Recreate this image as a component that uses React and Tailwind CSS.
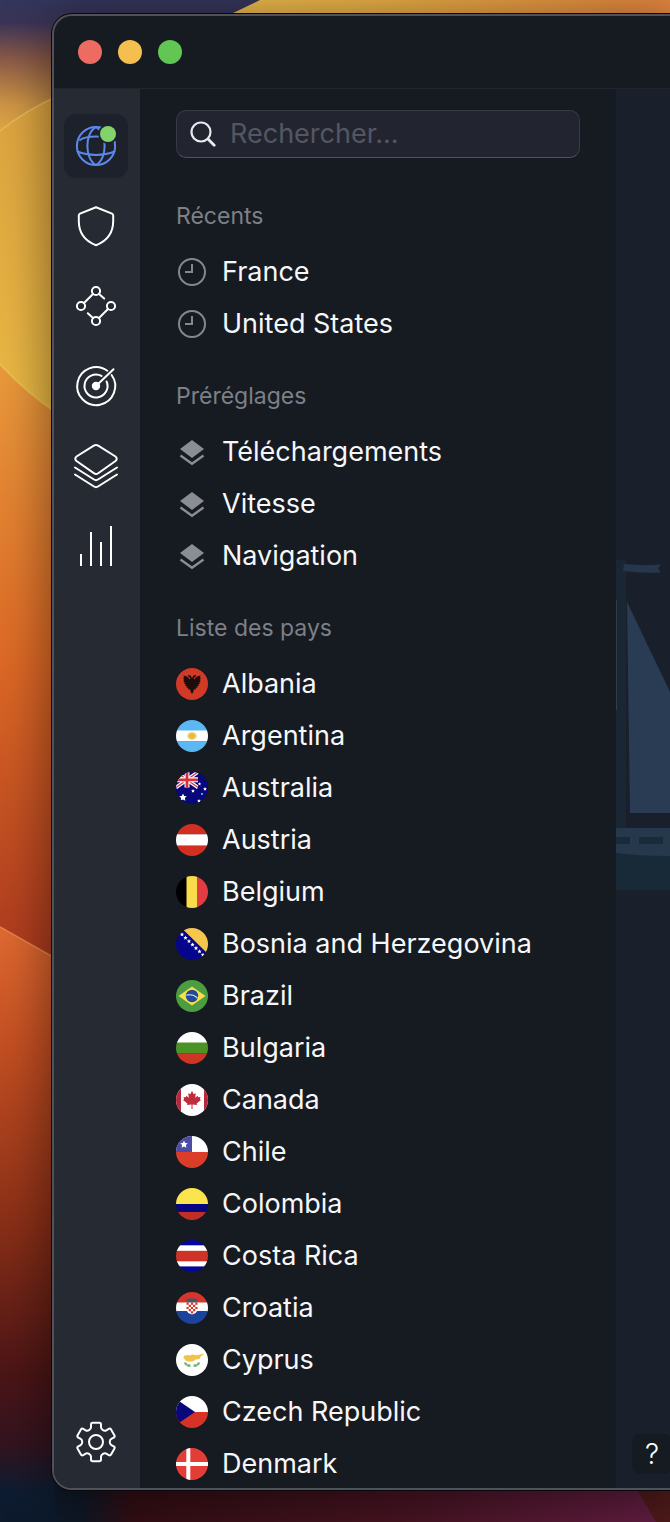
import React from "react";

const GEAR_TOOTH = [
  ["L", [-5, -14.8]],
  ["L", [-5, -17.6]],
  ["Q", [-5, -19.3], [-3.3, -19.3]],
  ["L", [3.3, -19.3]],
  ["Q", [5, -19.3], [5, -17.6]],
  ["L", [5, -14.8]],
  ["C", [5, -12.4], [8.24, -10.53], [10.32, -11.73]],
];

function gearPath() {
  let d = "";
  for (let i = 0; i < 6; i++) {
    const a = (i * Math.PI) / 3;
    GEAR_TOOTH.forEach(([cmd, ...pts], j) => {
      const out = pts.map(([x, y]) => {
        const rx = 20 + x * Math.cos(a) - y * Math.sin(a);
        const ry = 20 + x * Math.sin(a) + y * Math.cos(a);
        return `${rx.toFixed(2)} ${ry.toFixed(2)}`;
      });
      d += (i === 0 && j === 0 ? "M" : cmd) + out.join(" ");
    });
  }
  return d + "Z";
}

function LineIcon({ children, large }) {
  return (
    <svg
      viewBox={large ? "0 0 44 44" : "0 0 40 40"}
      className={large ? "size-11 overflow-visible" : "size-10 overflow-visible"}
      fill="none"
      stroke="currentColor"
      strokeWidth="2"
      strokeLinecap="round"
      strokeLinejoin="round"
      aria-hidden="true"
    >
      {children}
    </svg>
  );
}

const NAV = [
  {
    label: "VPN",
    active: true,
    icon: (
      <LineIcon>
        <g stroke="#5b88ea">
          <circle cx="20" cy="20" r="19.1" />
          <path d="M20 1C8.5 7 8.5 33 20 39M20 1C31.5 7 31.5 33 20 39" />
          <path d="M4 14C9 10.5 15 10.5 20 10.5S31 10.5 36 14M1.5 25.5C12 30 28 30 38.5 25.5" />
        </g>
        <circle cx="32" cy="8" r="9.8" fill="#1d212b" stroke="none" />
        <circle cx="32" cy="8" r="8" fill="#82d36c" stroke="none" />
      </LineIcon>
    ),
  },
  {
    label: "Protection",
    icon: (
      <LineIcon>
        <path d="M20 1.2 36 7.6Q37.2 8.2 37.2 9.5V15C37.2 27 31 35 20 39.2C9 35 2.8 27 2.8 15V9.5Q2.8 8.2 4 7.6Z" />
      </LineIcon>
    ),
  },
  {
    label: "MultiHop",
    icon: (
      <LineIcon>
        <circle cx="20" cy="5" r="4.1" />
        <circle cx="5" cy="20" r="4.1" />
        <circle cx="35" cy="20" r="4.1" />
        <circle cx="20" cy="35" r="4.1" />
        <path d="M8 17 17 8M23 8l5.200 4.600M32 23l-9 9M17 32l-5.200-4.800" />
      </LineIcon>
    ),
  },
  {
    label: "Cible",
    icon: (
      <LineIcon>
        <path d="M31.3 4.7A19 19 0 1 0 35.600 9" />
        <path d="M25.5 9.9A11.5 11.5 0 1 0 30.600 15.500" />
        <path d="M20 20 37.5 3.2" />
        <circle cx="20" cy="20" r="3.2" fill="currentColor" />
      </LineIcon>
    ),
  },
  {
    label: "Préréglages",
    icon: (
      <LineIcon large>
        <path d="M19.8 1.7Q22 .3 24.2 1.7L41.5 12.5Q44 14.5 41.5 17L24.2 29.2Q22 30.7 19.8 29.2L2.500 17Q0 14.500 2.500 12.500Z" />
        <path d="M1 23.5 20 35.5Q22 36.8 24 35.500L43 23.500M1 30.500 20 42.500Q22 43.800 24 42.500L43 30.500" />
      </LineIcon>
    ),
  },
  {
    label: "Statistiques",
    icon: (
      <LineIcon>
        <path strokeLinecap="butt" d="M5 40V28M15 40V6M25 40V16M35 40V0" />
      </LineIcon>
    ),
  },
];

function ClockIcon() {
  return (
    <svg viewBox="0 0 32 32" className="size-8 shrink-0" fill="none" stroke="#85878e" strokeWidth="2" aria-hidden="true">
      <circle cx="16" cy="16" r="13" />
      <path d="M16 8V16H9" />
    </svg>
  );
}

function PresetIcon() {
  return (
    <svg viewBox="0 0 32 32" className="size-8 shrink-0" aria-hidden="true">
      <path d="M16 4 28 13 16 22 4 13Z" fill="#8b8d94" />
      <path d="M4.500 19.500 16 27.800 27.500 19.500" fill="none" stroke="#8b8d94" strokeWidth="2.400" />
    </svg>
  );
}

function Flag({ children }) {
  return (
    <svg viewBox="0 0 32 32" className="size-8 shrink-0 overflow-hidden rounded-full" aria-hidden="true">
      {children}
    </svg>
  );
}

function Bands({ rows }) {
  return rows.map(([y, h, fill]) => <rect key={y} x="0" y={y} width="32" height={h} fill={fill} />);
}

const STAR = "M0-1 .3-.38 .95-.31 .47.14 .59.81 0 .48-.59.81-.47.14-.95-.31-.3-.38Z";

function Star({ x, y, r }) {
  return <path d={STAR} transform={`translate(${x} ${y}) scale(${r})`} fill="#fff" />;
}

const COUNTRIES = [
  [
    "Albania",
    <>
      <Bands rows={[[0, 32, "#d23a28"]]} />
      <path
        d="M16 10 14.500 7.500 12 7 12.500 9 14.300 10 14 11.500 11 8.500 7.500 7.500 8 10 7 10.500 8.300 12 7.200 13 8.700 14.200 8 15.500 9.700 16.300 9 17.800 11 18 10.500 20 12.500 19.500 12 21.800 14 21 14.500 23.500 16 26 17.500 23.500 18 21 20 21.800 19.500 19.500 21.500 20 21 18 23 17.800 22.300 16.300 24 15.500 23.300 14.200 24.800 13 23.700 12 25 10.500 24 10 24.500 7.500 21 8.500 18 11.500 17.700 10 19.500 9 20 7 17.500 7.500Z"
        fill="#1c0d0c"
      />
    </>,
  ],
  [
    "Argentina",
    <>
      <Bands rows={[[0, 11, "#5bb8f2"], [10.5, 11, "#fff"], [21.3, 11, "#5bb8f2"]]} />
      <ellipse cx="16" cy="16" rx="4.8" ry="3.9" fill="#f0d377" />
      <circle cx="16" cy="16" r="2.8" fill="#e6b93c" />
    </>,
  ],
  [
    "Australia",
    <>
      <Bands rows={[[0, 32, "#08087c"]]} />
      <path d="M0 0 22 15.500M22 0 0 15.500" stroke="#fff" strokeWidth="3.600" />
      <path d="M0 0 22 15.500M22 0 0 15.500" stroke="#d8303a" strokeWidth="1.300" />
      <path d="M11 0V15.500M0 7.800H22" stroke="#fff" strokeWidth="5" />
      <path d="M11 0V15.500M0 7.800H22" stroke="#d8303a" strokeWidth="2.800" />
      <path d="M22 0H32V16H22Z" fill="#08087c" />
      <Star x={7} y={25.5} r={4} />
      <Star x={23.5} y={12} r={1.7} />
      <Star x={29} y={17} r={2} />
      <Star x={17} y={19} r={2} />
      <Star x={26} y={22} r={1.2} />
      <Star x={23} y={29} r={2} />
    </>,
  ],
  ["Austria", <Bands rows={[[0, 10.5, "#d22f22"], [10.3, 11.5, "#fff"], [21.6, 11, "#d22f22"]]} />],
  [
    "Belgium",
    <>
      <rect width="11" height="32" fill="#000" />
      <rect x="10.5" width="11" height="32" fill="#f8dc4a" />
      <rect x="21.3" width="11" height="32" fill="#e23c42" />
    </>,
  ],
  [
    "Bosnia and Herzegovina",
    <>
      <Bands rows={[[0, 32, "#06068c"]]} />
      <path d="M5.5 0H32V26Z" fill="#f7c74b" />
      {[0, 1, 2, 3, 4, 5, 6].map((i) => (
        <Star key={i} x={6 + i * 3.5} y={6.5 + i * 3.4} r={2.2} />
      ))}
    </>,
  ],
  [
    "Brazil",
    <>
      <Bands rows={[[0, 32, "#4c9c42"]]} />
      <path d="M2.5 16 16 6.5 29.5 16 16 25.5Z" fill="#f6e04b" />
      <circle cx="16" cy="16" r="6.2" fill="#24499b" />
      <path d="M10.3 15.2Q17 13.5 21.5 18" fill="none" stroke="#cfe0ee" strokeWidth="1.2" />
    </>,
  ],
  ["Bulgaria", <Bands rows={[[0, 11, "#fff"], [10.5, 11, "#4b9327"], [21.3, 11, "#cf3524"]]} />],
  [
    "Canada",
    <>
      <Bands rows={[[0, 32, "#fff"]]} />
      <path d="M0 0H5V32H0ZM28 0H32V32H28Z" fill="#b6293c" />
      <path
        d="M16 7 17.800 10.200 19.800 9.200 19.200 14 21.500 11.800 22.200 13.300 24.500 13 23.800 15.300 25 16 20.600 19.600 21 21 16.500 20.400V25H15.500V20.400L11 21 11.400 19.600 7 16 8.200 15.300 7.500 13 9.800 13.300 10.500 11.800 12.800 14 12.200 9.200 14.200 10.200Z"
        fill="#c12b3c"
      />
    </>,
  ],
  [
    "Chile",
    <>
      <Bands rows={[[0, 16, "#fff"], [16, 16, "#dc3d28"]]} />
      <rect width="16" height="16" fill="#4c4ba6" />
      <Star x={8} y={8.5} r={4} />
    </>,
  ],
  ["Colombia", <Bands rows={[[0, 16, "#fce44d"], [16, 8, "#06067f"], [24, 8, "#c22e26"]]} />],
  [
    "Costa Rica",
    <Bands
      rows={[[0, 5.5, "#0505a0"], [5.3, 6, "#fff"], [10.8, 11, "#cf3327"], [21.3, 5.5, "#fff"], [26.5, 6, "#0505a0"]]}
    />,
  ],
  [
    "Croatia",
    <>
      <Bands rows={[[0, 11, "#d5352a"], [10.5, 9, "#fff"], [19, 13, "#1c439c"]]} />
      <path d="M10 6.500 12 7.500 14 6 16 7 18 6 20 7.500 22 6.500 21 11H11Z" fill="#4b5468" />
      <path d="M10.500 10.500H21.500V17.500Q21 21.500 16 22.500Q11 21.500 10.500 17.500Z" fill="#fff" />
      <path
        d="M10.500 10.500h2.200v2.200h-2.200zM14.900 10.500h2.200v2.200h-2.200zM19.300 10.500h2.200v2.200h-2.200zM12.700 12.700h2.200v2.200h-2.200zM17.100 12.700h2.200v2.200h-2.200zM10.500 14.900h2.200v2.200h-2.200zM14.900 14.900h2.200v2.200h-2.200zM19.300 14.900h2.200v2.200h-2.200zM12.700 17.100h2.200v2.200h-2.200zM17.100 17.100h2.200v2.200h-2.200zM14.900 19.300h2.200v2.200h-2.200z"
        fill="#d5352a"
      />
    </>,
  ],
  [
    "Cyprus",
    <>
      <Bands rows={[[0, 32, "#fff"]]} />
      <path
        d="M7.500 13.500 8 11.800 11.500 11 14 11.500 16 10.500 21 11.300 28.500 9.500 24.500 12.800 23.500 15 19.500 15.500 17.500 17.300 13 17.800 9.500 16.500Z"
        fill="#f3c24a"
      />
      <path d="M9 18.500Q10 22 15 21.700M23 18.500Q22 22 17 21.700" fill="none" stroke="#76b06c" strokeWidth="2.400" strokeDasharray="3 .5" />
    </>,
  ],
  [
    "Czech Republic",
    <>
      <Bands rows={[[0, 16, "#fff"], [16, 16, "#d83226"]]} />
      <path d="M0 3 19 16 0 29Z" fill="#08087c" />
    </>,
  ],
  [
    "Denmark",
    <>
      <Bands rows={[[0, 32, "#e23d36"]]} />
      <path d="M12.3 0V32M0 16H32" stroke="#fff" strokeWidth="4" />
    </>,
  ],
];

function Section({ title, children }) {
  return (
    <section>
      <h2 className="pt-[31px] pb-[15px] text-[23px] leading-[30px] font-normal text-[#7d8087]">{title}</h2>
      <ul>{children}</ul>
    </section>
  );
}

function Row({ icon, label }) {
  return (
    <li>
      <button type="button" className="flex h-[52px] w-full items-center gap-3.5 text-left text-[27px] text-[#f6f7f9]">
        {icon}
        <span className="leading-9 whitespace-nowrap">{label}</span>
      </button>
    </li>
  );
}

function Wallpaper() {
  return (
    <svg viewBox="0 0 670 1522" preserveAspectRatio="xMinYMin slice" className="absolute inset-0 h-full w-full" aria-hidden="true">
      <defs>
        <linearGradient id="sky" x1="0" y1="0" x2="0" y2="140" gradientUnits="userSpaceOnUse">
          <stop offset="0" stopColor="#33365c" />
          <stop offset=".16" stopColor="#3b3458" />
          <stop offset=".42" stopColor="#8a5a48" />
          <stop offset=".75" stopColor="#cf9545" />
          <stop offset="1" stopColor="#e5ac46" />
        </linearGradient>
        <linearGradient id="ridge" x1="235" y1="0" x2="670" y2="0" gradientUnits="userSpaceOnUse">
          <stop offset="0" stopColor="#ecbb4c" />
          <stop offset=".35" stopColor="#e8ae45" />
          <stop offset="1" stopColor="#e2853e" />
        </linearGradient>
        <linearGradient id="gold" x1="0" y1="100" x2="0" y2="410" gradientUnits="userSpaceOnUse">
          <stop offset="0" stopColor="#dda440" />
          <stop offset="1" stopColor="#ebb944" />
        </linearGradient>
        <linearGradient id="orange" x1="0" y1="364" x2="0" y2="957" gradientUnits="userSpaceOnUse">
          <stop offset="0" stopColor="#ea9a3c" />
          <stop offset=".5" stopColor="#dd6926" />
          <stop offset="1" stopColor="#ad3a1e" />
        </linearGradient>
        <linearGradient id="ember" x1="0" y1="927" x2="0" y2="1522" gradientUnits="userSpaceOnUse">
          <stop offset="0" stopColor="#e06a31" />
          <stop offset=".2" stopColor="#c44f22" />
          <stop offset=".5" stopColor="#8a2f17" />
          <stop offset=".75" stopColor="#4c1516" />
          <stop offset=".87" stopColor="#331420" />
          <stop offset=".95" stopColor="#0e1c31" />
          <stop offset="1" stopColor="#0d1a2c" />
        </linearGradient>
        <linearGradient id="floor" x1="0" y1="0" x2="670" y2="0" gradientUnits="userSpaceOnUse">
          <stop offset="0" stopColor="#0d1a2c" />
          <stop offset=".12" stopColor="#0f1826" />
          <stop offset=".2" stopColor="#340e14" />
          <stop offset=".6" stopColor="#481422" />
          <stop offset="1" stopColor="#651e44" />
        </linearGradient>
      </defs>
      <rect width="670" height="1522" fill="url(#sky)" />
      <path d="M229 15 260 0H670V15Z" fill="url(#ridge)" />
      <path d="M0 131Q26 110 60 95V420H0Z" fill="url(#gold)" />
      <path d="M0 131Q26 110 60 95" fill="none" stroke="#e8b95a" strokeWidth="1.5" />
      <path d="M0 364Q28 394 60 415V970H0Z" fill="url(#orange)" />
      <path d="M0 364Q28 394 60 415" fill="none" stroke="#ecc04c" strokeWidth="2" />
      <path d="M0 927 60 961V1522H0Z" fill="url(#ember)" />
      <path d="M0 927 60 961" stroke="#e58348" strokeWidth="1.5" />
      <path d="M55 1480H670V1522H55Z" fill="url(#floor)" />
      <path d="M636 1488H670V1522H656Z" fill="#4e1a1a" />
    </svg>
  );
}

function Boat() {
  return (
    <svg viewBox="0 0 54 330" className="mt-[471px] h-[330px] w-[54px] shrink-0" aria-hidden="true">
      <rect width="10" height="268" fill="#1a2633" />
      <path d="M8 4Q26 6 45 4.500L42 8.500 45 12.500Q24 13.500 7 11Z" fill="#26364c" />
      <path d="M.5 40V150" stroke="#323d4a" />
      <path d="M11 42 54 132V253H14Z" fill="#293c53" />
      <rect y="268" width="54" height="28" fill="#26384b" />
      <path d="M0 277H14V284H0ZM23 277H47V284H23Z" fill="#192a38" />
      <path d="M0 293Q20 296 54 296V330H0Z" fill="#182937" />
    </svg>
  );
}

export default function App() {
  return (
    <div className="relative min-h-screen overflow-hidden bg-[#0d1a2c] pt-3.5 pb-8 pl-[52px] font-['Inter','Liberation_Sans',sans-serif]">
      <Wallpaper />
      <div className="relative flex flex-col overflow-hidden rounded-l-[20px] border-2 border-r-0 border-[#505159] bg-[#161a21] shadow-[0_0_0_1px_#08090c,0_8px_50px_4px_rgba(0,0,0,0.45)]">
        <header className="flex h-[73px] items-center gap-4 border-b border-[#20252e] pl-6">
          <button type="button" aria-label="Fermer" className="size-6 rounded-full bg-[#ed6b60]" />
          <button type="button" aria-label="Réduire" className="size-6 rounded-full bg-[#f5bf4f]" />
          <button type="button" aria-label="Agrandir" className="size-6 rounded-full bg-[#62c655]" />
        </header>

        <div className="flex">
          <nav aria-label="Navigation principale" className="flex w-[86px] shrink-0 flex-col gap-4 bg-[#262a32] pt-[25px] pb-3.5 pl-2.5 text-white">
            {NAV.map((item) => (
              <button
                key={item.label}
                type="button"
                aria-label={item.label}
                className={
                  item.active
                    ? "flex size-16 items-center justify-center rounded-xl bg-[#1d212b]"
                    : "flex size-16 items-center justify-center rounded-xl"
                }
              >
                {item.icon}
              </button>
            ))}
            <button type="button" aria-label="Réglages" className="mt-auto flex size-16 items-center justify-center rounded-xl">
              <LineIcon>
                <path d={gearPath()} />
                <circle cx="20" cy="20" r="7" />
              </LineIcon>
            </button>
          </nav>

          <main className="-mb-0.5 w-[476px] shrink-0 px-9 pt-[21px]">
            <label className="mb-3 flex h-12 items-center gap-3.5 rounded-[10px] border border-[#383b45] border-b-[#50535c] bg-[#22252f] pl-[13px]">
              <svg viewBox="0 0 26 26" className="size-[26px] shrink-0" fill="none" stroke="#e9eaf0" strokeLinecap="round" aria-hidden="true">
                <circle cx="11" cy="11" r="9.5" strokeWidth="2.2" />
                <path d="M18 18 24.2 24.2" strokeWidth="2.8" />
              </svg>
              <input
                type="text"
                aria-label="Rechercher"
                placeholder="Rechercher..."
                className="h-11 min-w-0 flex-1 bg-transparent pb-0.5 text-[27px] text-white outline-none placeholder:text-[#545763]"
              />
            </label>

            <Section title="Récents">
              <Row icon={<ClockIcon />} label="France" />
              <Row icon={<ClockIcon />} label="United States" />
            </Section>
            <Section title="Préréglages">
              <Row icon={<PresetIcon />} label="Téléchargements" />
              <Row icon={<PresetIcon />} label="Vitesse" />
              <Row icon={<PresetIcon />} label="Navigation" />
            </Section>
            <Section title="Liste des pays">
              {COUNTRIES.map(([name, art]) => (
                <Row key={name} icon={<Flag>{art}</Flag>} label={name} />
              ))}
            </Section>
          </main>

          <aside className="flex min-w-0 flex-1 flex-col overflow-hidden bg-[#19202b]">
            <Boat />
            <button
              type="button"
              aria-label="Aide"
              className="mt-auto mb-3.5 ml-4 size-10 shrink-0 rounded-lg bg-[#161a21] text-[28px] leading-10 font-light text-white"
            >
              ?
            </button>
          </aside>
        </div>
      </div>
    </div>
  );
}
